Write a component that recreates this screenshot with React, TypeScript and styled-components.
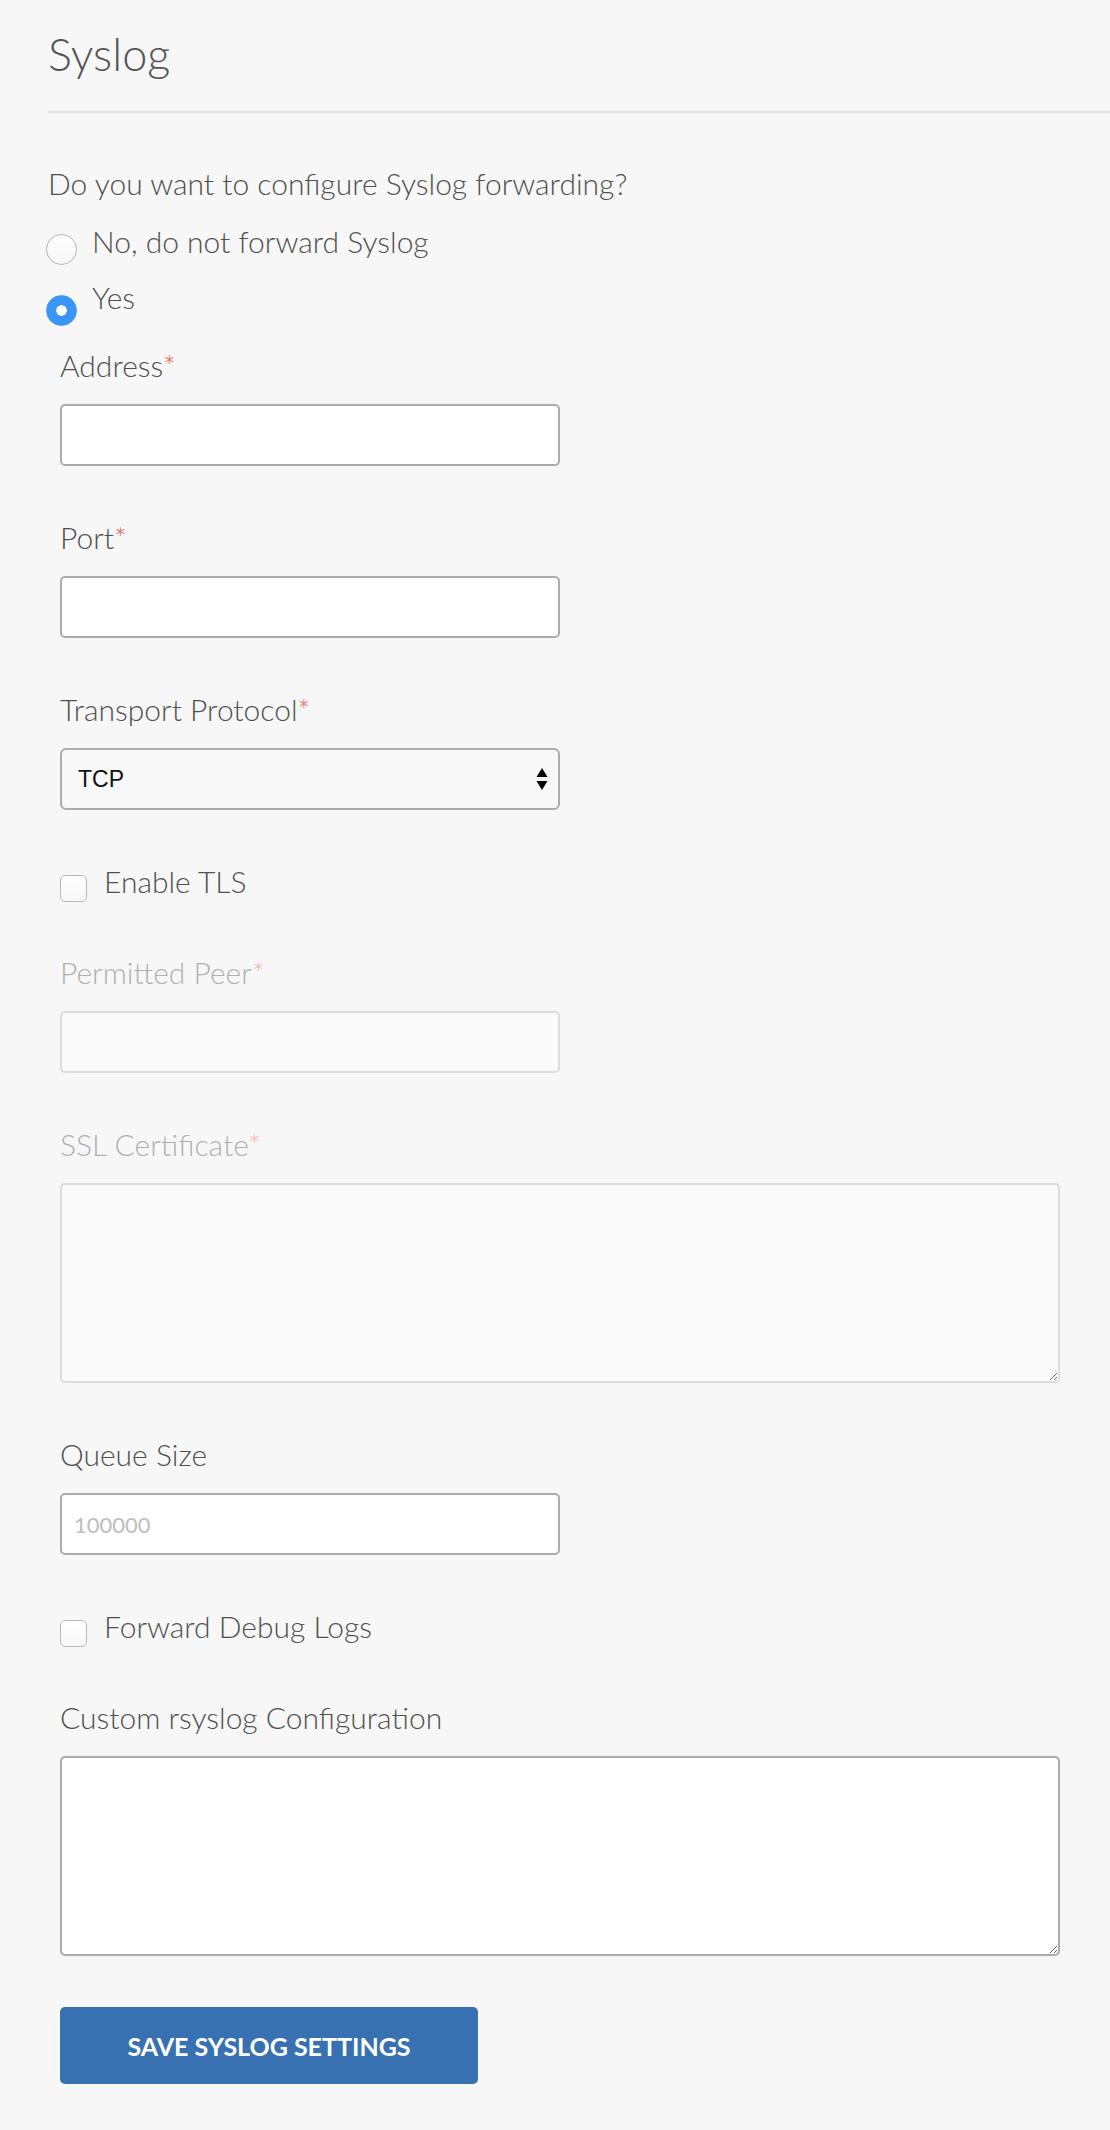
import React, { useState } from 'react';
import styled, { createGlobalStyle } from 'styled-components';

const GlobalStyle = createGlobalStyle`
  body {
    margin: 0;
    background: #f7f7f7;
    font-family: Lato, "Open Sans", sans-serif;
    font-weight: 300;
    color: #505050;
  }
`;

const Page = styled.div`
  padding: 26px 0 60px 48px;
`;

const Title = styled.h1`
  margin: 0;
  padding-bottom: 29px;
  border-bottom: 2px solid #e2e2e2;
  font-size: 45px;
  line-height: 56px;
  font-weight: 300;
  color: #555;
`;

const Question = styled.p`
  margin: 50px 0 18px;
  font-size: 30px;
  line-height: 40px;
`;

const RadioRow = styled.label`
  display: flex;
  align-items: flex-start;
  height: 40px;
  margin-left: -2px;
  margin-bottom: 16px;
  font-size: 30px;
  line-height: 40px;
  cursor: pointer;
`;

const RadioMark = styled.span<{ $checked: boolean }>`
  box-sizing: border-box;
  flex: none;
  width: 31px;
  height: 31px;
  margin-top: ${(p) => (p.$checked ? 18 : 13)}px;
  margin-right: 15px;
  border-radius: 50%;
  border: 1px solid ${(p) => (p.$checked ? '#3b95f6' : '#b4b4b4')};
  background: ${(p) =>
    p.$checked
      ? 'radial-gradient(circle, #fff 0 5px, #3b95f6 5.5px)'
      : 'linear-gradient(#fff, #f6f6f6)'};
`;

const Fields = styled.div`
  max-width: 1000px;
  padding-left: 12px;
  margin-top: 28px;
`;

const Field = styled.div`
  & + & {
    margin-top: 51px;
  }
`;

const Label = styled.label<{ $disabled?: boolean }>`
  display: block;
  margin-bottom: 19px;
  font-size: 30px;
  line-height: 40px;
  color: ${(p) => (p.$disabled ? '#b0b0b0' : '#505050')};
`;

const Required = styled.span<{ $disabled?: boolean }>`
  color: ${(p) => (p.$disabled ? '#f3b3ad' : '#ee5a4f')};
`;

const TextInput = styled.input`
  box-sizing: border-box;
  display: block;
  width: 500px;
  height: 62px;
  padding: 0 12px;
  border: 2px solid #acacac;
  border-radius: 5px;
  background: #fff;
  font-family: Lato, sans-serif;
  font-size: 22px;
  color: #333;
  outline: none;

  &::placeholder {
    color: #bdbdbd;
  }

  &:disabled {
    border-color: #dcdcdc;
    background: #fafafa;
  }
`;

const Select = styled.select`
  box-sizing: border-box;
  display: block;
  width: 500px;
  height: 62px;
  padding: 0 40px 0 16px;
  border: 2px solid #acacac;
  border-radius: 6px;
  appearance: none;
  background-color: #f8f8f8;
  background-image: url("data:image/svg+xml,%3Csvg xmlns='http://www.w3.org/2000/svg' width='12' height='23'%3E%3Cpath d='M6 0l5.5 9H0.5z M0.5 13h11L6 22z' fill='%23000'/%3E%3C/svg%3E");
  background-repeat: no-repeat;
  background-position: right 10px center;
  font-family: "Liberation Sans", Arial, sans-serif;
  font-size: 23px;
  font-weight: 500;
  color: #111;
  outline: none;
`;

const TextArea = styled.textarea`
  box-sizing: border-box;
  display: block;
  width: 1000px;
  height: 200px;
  padding: 12px;
  border: 2px solid #acacac;
  border-radius: 5px;
  background: #fff;
  font-family: Lato, sans-serif;
  font-size: 22px;
  outline: none;

  &:disabled {
    border-color: #dcdcdc;
    background: #fafafa;
  }
`;

const CheckRow = styled.label`
  display: flex;
  align-items: flex-start;
  height: 40px;
  font-size: 30px;
  line-height: 40px;
  cursor: pointer;
`;

const CheckBox = styled.input.attrs({ type: 'checkbox' })`
  box-sizing: border-box;
  flex: none;
  appearance: none;
  width: 27px;
  height: 27px;
  margin: 14px 17px 0 0;
  border: 1px solid #b8b8b8;
  border-radius: 5px;
  background: linear-gradient(#fff, #f7f7f7);

  &:checked {
    background: #3b95f6;
    border-color: #3b95f6;
  }
`;

const SaveButton = styled.button`
  display: block;
  width: 418px;
  height: 77px;
  margin-top: 51px;
  border: none;
  border-radius: 5px;
  background: #3771b1;
  color: #fff;
  font-family: Lato, sans-serif;
  font-size: 25px;
  font-weight: 700;
  text-transform: uppercase;
  cursor: pointer;

  &:hover {
    background: #2f6299;
  }
`;

const App: React.FC = () => {
  const [forward, setForward] = useState(true);
  const [tls, setTls] = useState(false);
  const [debug, setDebug] = useState(false);

  return (
    <Page>
      <GlobalStyle />
      <Title>Syslog</Title>
      <Question>Do you want to configure Syslog forwarding?</Question>
      <RadioRow onClick={() => setForward(false)}>
        <RadioMark $checked={!forward} />
        No, do not forward Syslog
      </RadioRow>
      <RadioRow onClick={() => setForward(true)}>
        <RadioMark $checked={forward} />
        Yes
      </RadioRow>

      {forward && (
        <Fields>
          <Field>
            <Label>
              Address<Required>*</Required>
            </Label>
            <TextInput type="text" />
          </Field>
          <Field>
            <Label>
              Port<Required>*</Required>
            </Label>
            <TextInput type="text" />
          </Field>
          <Field>
            <Label>
              Transport Protocol<Required>*</Required>
            </Label>
            <Select defaultValue="TCP">
              <option>TCP</option>
              <option>UDP</option>
            </Select>
          </Field>
          <Field>
            <CheckRow>
              <CheckBox checked={tls} onChange={() => setTls(!tls)} />
              Enable TLS
            </CheckRow>
          </Field>
          <Field>
            <Label $disabled={!tls}>
              Permitted Peer<Required $disabled={!tls}>*</Required>
            </Label>
            <TextInput type="text" disabled={!tls} />
          </Field>
          <Field>
            <Label $disabled={!tls}>
              SSL Certificate<Required $disabled={!tls}>*</Required>
            </Label>
            <TextArea disabled={!tls} />
          </Field>
          <Field>
            <Label>Queue Size</Label>
            <TextInput type="text" placeholder="100000" />
          </Field>
          <Field>
            <CheckRow>
              <CheckBox checked={debug} onChange={() => setDebug(!debug)} />
              Forward Debug Logs
            </CheckRow>
          </Field>
          <Field>
            <Label>Custom rsyslog Configuration</Label>
            <TextArea />
          </Field>
          <SaveButton type="button">Save Syslog Settings</SaveButton>
        </Fields>
      )}
    </Page>
  );
};

export default App;
